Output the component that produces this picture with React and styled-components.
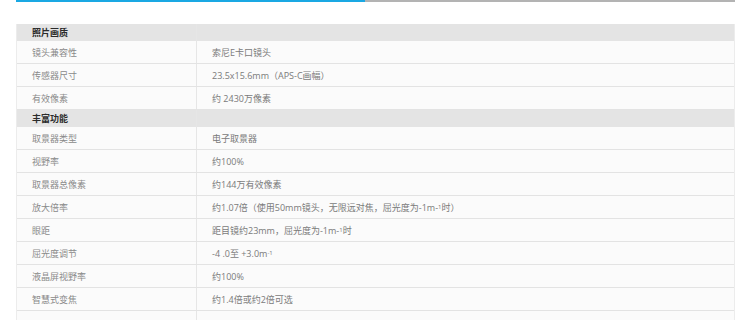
import React from 'react';
import styled, { createGlobalStyle } from 'styled-components';

const Global = createGlobalStyle`
  body {
    margin: 0;
    background: #fff;
    font-family: 'Open Sans', 'Noto Sans CJK SC', sans-serif;
  }
`;

const Page = styled.div`
  width: 750px;
  height: 320px;
  overflow: hidden;
  padding: 0 15px 0 16px;
  box-sizing: border-box;
`;

const TopBar = styled.div`
  display: flex;
  height: 2px;
  background: #b3b3b3;
`;

const TopBarActive = styled.div`
  width: 349px;
  background: #1aa8e3;
`;

const Table = styled.div`
  margin-top: 22px;
  border-left: 1px solid #ececec;
  border-right: 1px solid #ececec;
`;

const Row = styled.div`
  display: grid;
  grid-template-columns: 179px 1fr;
  height: ${p => (p.$head ? '17px' : '22px')};
  background: ${p => (p.$head ? '#e4e4e4' : '#fbfbfb')};
  border-bottom: ${p => (p.$head ? 'none' : '1px solid #e3e3e3')};
  font-size: 9px;
  line-height: 1;
  color: ${p => (p.$head ? '#2b2b2b' : '#8a8a8a')};
  font-weight: ${p => (p.$head ? 700 : 400)};
`;

const Cell = styled.div`
  display: flex;
  align-items: center;
  padding-left: 15px;
  border-left: ${p => (p.$value ? '1px solid #e6e6e6' : 'none')};
  white-space: nowrap;
  color: ${p => (p.$value ? '#7a7a7a' : 'inherit')};
`;

const Sup = styled.sup`
  font-size: 6px;
  vertical-align: 3px;
`;

const sections = [
  {
    title: '照片画质',
    rows: [
      ['镜头兼容性', '索尼E卡口镜头'],
      ['传感器尺寸', '23.5x15.6mm（APS-C画幅）'],
      ['有效像素', '约 2430万像素'],
    ],
  },
  {
    title: '丰富功能',
    rows: [
      ['取景器类型', '电子取景器'],
      ['视野率', '约100%'],
      ['取景器总像素', '约144万有效像素'],
      ['放大倍率', <>约1.07倍（使用50mm镜头，无限远对焦，屈光度为-1m-<Sup>1</Sup>时）</>],
      ['眼距', <>距目镜约23mm，屈光度为-1m-<Sup>1</Sup>时</>],
      ['屈光度调节', <>-4 .0至 +3.0m<Sup>-1</Sup></>],
      ['液晶屏视野率', '约100%'],
      ['智慧式变焦', '约1.4倍或约2倍可选'],
      ['', ''],
    ],
  },
];

export default function App() {
  return (
    <Page>
      <Global />
      <TopBar>
        <TopBarActive />
      </TopBar>
      <Table>
        {sections.map(s => (
          <React.Fragment key={s.title}>
            <Row $head>
              <Cell>{s.title}</Cell>
              <Cell $value />
            </Row>
            {s.rows.map((r, i) => (
              <Row key={i}>
                <Cell>{r[0]}</Cell>
                <Cell $value>{r[1]}</Cell>
              </Row>
            ))}
          </React.Fragment>
        ))}
      </Table>
    </Page>
  );
}
